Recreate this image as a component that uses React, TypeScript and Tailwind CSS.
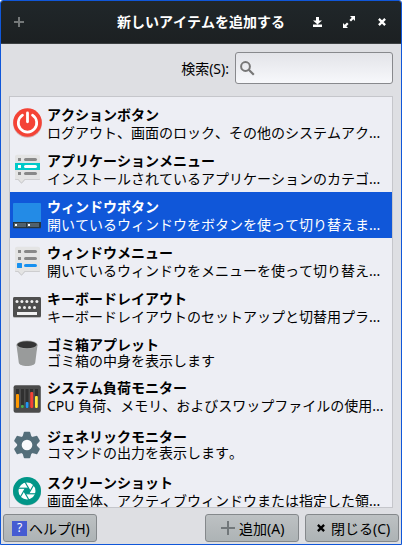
import type { ReactNode } from 'react';

const PowerIcon = () => (
  <svg width="32" height="32" viewBox="0 0 32 32">
    <circle cx="15.500" cy="16.300" r="14.500" fill="#d5b5b8" />
    <circle cx="15.500" cy="15.500" r="14.300" fill="#f44336" />
    <path d="M10.500 8.200a9.200 9.200 0 1 0 10 0" fill="none" stroke="#fff" strokeWidth="2.700" strokeLinecap="round" />
    <path d="M15.500 6v8.800" stroke="#fff" strokeWidth="2.800" strokeLinecap="round" />
  </svg>
);

const Bubble = ({ children }: { children: ReactNode }) => (
  <svg width="32" height="32" viewBox="0 0 32 32">
    <path d="M5 3h21a2 2 0 0 1 2 2v21a1 1 0 0 1-1 1H13l-3.500 3.800L6 27H4a1 1 0 0 1-1-1V5a2 2 0 0 1 2-2z" fill="#c6c6c8" />
    <path d="M5 1.700h21a2 2 0 0 1 2 2v21.500a1 1 0 0 1-1 1H12.500L9.500 29.700 6.500 26.200H4a1 1 0 0 1-1-1V3.700a2 2 0 0 1 2-2z" fill="#e4e4e4" />
    {children}
  </svg>
);

const AppMenuIcon = () => (
  <Bubble>
    <rect x="3" y="10" width="25" height="7" fill="#00c9c9" />
    <g fill="#888">
      <rect x="6" y="5" width="3" height="3" />
      <rect x="12" y="4.900" width="13" height="3.200" rx="1.600" />
      <rect x="6" y="19" width="3" height="3" />
      <rect x="12" y="18.900" width="13" height="3.200" rx="1.600" />
    </g>
    <rect x="6" y="12" width="3" height="3" fill="#fff" />
    <rect x="12" y="11.900" width="13" height="3.200" rx="1.600" fill="#fff" />
  </Bubble>
);

const WindowMenuIcon = () => (
  <Bubble>
    <g fill="#888">
      <rect x="6" y="5" width="3" height="3" />
      <rect x="12" y="4.900" width="13" height="3.200" rx="1.600" />
      <rect x="6" y="12" width="3" height="3" />
      <rect x="12" y="11.900" width="13" height="3.200" rx="1.600" />
    </g>
    <g fill="#1690f0">
      <rect x="5" y="18" width="5" height="5" rx=".5" />
      <rect x="12" y="18.900" width="13" height="3.200" rx="1.600" />
    </g>
  </Bubble>
);

const TaskbarIcon = () => (
  <svg width="32" height="32" viewBox="0 0 32 32">
    <rect x="1" y="5" width="28" height="24.800" rx="1" fill="#174fa8" />
    <path d="M2 4h26a1 1 0 0 1 1 1v18H1V5a1 1 0 0 1 1-1z" fill="#238be6" />
    <path d="M1 23h28v5a1 1 0 0 1-1 1H2a1 1 0 0 1-1-1z" fill="#28353c" />
    <rect x="2" y="24" width="12" height="4" fill="#51616c" />
    <rect x="15" y="24" width="12" height="4" fill="#51616c" />
    <path d="M3 25h2v2H3zM16 25h2v2h-2z" fill="#fff" />
  </svg>
);

const KeyboardIcon = () => (
  <svg width="32" height="32" viewBox="0 0 32 32">
    <rect x="1" y="6" width="28" height="20.800" rx="1.500" fill="#aaa" />
    <rect x="1" y="6" width="28" height="20" rx="1.500" fill="#4f4f4f" />
    <g fill="#f1f1f1">
      {[5, 9.9, 14.9, 19.9, 24.9].map((x) => <circle key={x} cx={x} cy="10.500" r="1.500" />)}
      {[7.5, 12.5, 17.5, 22.5].map((x) => <circle key={x} cx={x} cy="16.500" r="1.500" />)}
      <rect x="5" y="21" width="20" height="3" />
    </g>
  </svg>
);

const TrashIcon = () => (
  <svg width="32" height="32" viewBox="0 0 32 32">
    <path d="M4.500 8h21l-2.300 17.800c-.3 2-3.500 3.200-8.200 3.200s-7.900-1.200-8.200-3.200z" fill="#999b9b" />
    <ellipse cx="15" cy="7.700" rx="10.600" ry="4.300" fill="#a7a9a9" />
    <ellipse cx="15" cy="7.700" rx="9.800" ry="3.500" fill="#343434" />
  </svg>
);

const LoadIcon = () => (
  <svg width="32" height="32" viewBox="0 0 32 32">
    <rect x="1.600" y="2.200" width="27.200" height="27.600" rx="2" fill="#4b4b4b" />
    <path d="M4 6h3v19H4zM9 6h3v19H9zM13.500 6h3v19h-3zM18 6h3v19h-3zM23 6h3v19h-3z" fill="#303030" />
    <rect x="4" y="11" width="3" height="14" rx="1" fill="#ff9800" />
    <rect x="9" y="22" width="2.800" height="3" rx="1" fill="#4caf50" />
    <rect x="13.700" y="19" width="2.800" height="6" rx="1" fill="#2196f3" />
    <rect x="18.200" y="9" width="3" height="16" rx="1" fill="#f44336" />
    <rect x="23" y="13" width="2.800" height="12" rx="1" fill="#ffeb3b" />
  </svg>
);

const GearIcon = () => (
  <svg width="32" height="32" viewBox="0 0 32 32">
    <g fill="#546e7a">
      <circle cx="15" cy="16" r="9.800" />
      {[0, 60, 120, 180, 240, 300].map((a) => (
        <path key={a} transform={`rotate(${a} 15 16)`} d="M12.700 2.700h4.600a1 1 0 0 1 1 1l1.500 5h-9.600l1.500-5a1 1 0 0 1 1-1z" />
      ))}
    </g>
    <circle cx="15" cy="16" r="5.300" fill="#f8f9fb" />
  </svg>
);

const ShutterIcon = () => (
  <svg width="32" height="32" viewBox="0 0 32 32">
    <circle cx="15" cy="16.700" r="14" fill="#a9c5c4" />
    <circle cx="15" cy="16" r="14" fill="#009688" />
    <circle cx="15" cy="16" r="8.500" fill="#fff" />
    <path d="M13.400 13.230h3.200l1.600 2.770-1.600 2.770h-3.200L11.800 16z" fill="#009688" />
    <g stroke="#009688" strokeWidth="1.200" fill="none">
      {[0, 60, 120, 180, 240, 300].map((a) => (
        <path key={a} transform={`rotate(${a} 15 16)`} d="M16.600 13.230H6.500" />
      ))}
    </g>
  </svg>
);

const items = [
  { icon: <PowerIcon />, name: 'アクションボタン', text: 'ログアウト、画面のロック、その他のシステムアク...', row: 'h-[46px]', lines: 'leading-[18px] pt-[2px]' },
  { icon: <AppMenuIcon />, name: 'アプリケーションメニュー', text: 'インストールされているアプリケーションのカテゴ...', row: 'h-[46px]', lines: 'leading-[18px] pt-[2px]' },
  { icon: <TaskbarIcon />, name: 'ウィンドウボタン', text: '開いているウィンドウをボタンを使って切り替えま...', row: 'h-[46px] bg-[#1057d9] text-white', lines: 'leading-[18px] pt-[2px]' },
  { icon: <WindowMenuIcon />, name: 'ウィンドウメニュー', text: '開いているウィンドウをメニューを使って切り替え...', row: 'h-[46px]', lines: 'leading-[18px] pt-[2px]' },
  { icon: <KeyboardIcon />, name: 'キーボードレイアウト', text: 'キーボードレイアウトのセットアップと切替用プラ...', row: 'h-[46px]', lines: 'leading-[18px] pt-[2px]' },
  { icon: <TrashIcon />, name: 'ゴミ箱アプレット', text: 'ゴミ箱の中身を表示します', row: 'h-[46px]', lines: 'leading-[16px]' },
  { icon: <LoadIcon />, name: 'システム負荷モニター', text: 'CPU 負荷、メモリ、およびスワップファイルの使用...', row: 'h-[46px]', lines: 'leading-[18px] pb-[5px]' },
  { icon: <GearIcon />, name: 'ジェネリックモニター', text: 'コマンドの出力を表示します。', row: 'h-[46px]', lines: 'leading-[16px]' },
  { icon: <ShutterIcon />, name: 'スクリーンショット', text: '画面全体、アクティブウィンドウまたは指定した領...', row: 'h-[46px]', lines: 'leading-[18px] pt-[2px]' },
];

const buttonStyle =
  'flex h-7 w-[94px] items-center rounded-[3px] border border-[#84888b] bg-linear-to-b from-[#bdc1c3] to-[#adb3b5] whitespace-nowrap';

export default function App() {
  return (
    <div className="flex h-[545px] w-[402px] flex-col overflow-hidden rounded-t-[3px] border border-[#1057d9] bg-[#dedfe3] font-['Noto_Sans','Noto_Sans_CJK_JP',sans-serif] text-[14px] text-black [font-kerning:none]">
      <header className="flex h-[43px] shrink-0 items-center border-b border-[#3c4042] bg-linear-to-b from-[#20272a] to-[#1c2022] text-white">
        <svg className="ml-[13px] shrink-0" width="10" height="10" viewBox="0 0 10 10">
          <path d="M4 0h2v4h4v2H6v4H4V6H0V4h4z" fill="#747879" />
        </svg>
        <h1 className="ml-[93px] w-[168px] text-[14px] leading-5 font-bold whitespace-nowrap">新しいアイテムを追加する</h1>
        <svg className="ml-[28px] shrink-0" width="9" height="12" viewBox="0 0 9 12">
          <path d="M3 1h3v3.500h3L4.500 8.500 0 4.500h3zM0 8.500h9V11H0z" fill="#fff" />
        </svg>
        <svg className="ml-[21px] shrink-0" width="13" height="12" viewBox="0 0 13 12">
          <path d="M7 0h5v5l-1.700-1.700-2.300 2.300L6.400 4l2.300-2.300zM0 7l1.700 1.700L4 6.400 5.600 8l-2.300 2.300L5 12H0z" fill="#fff" />
        </svg>
        <svg className="ml-[22px] shrink-0" width="8" height="8" viewBox="0 0 8 8">
          <path d="M.9.9l6.200 6.200M7.100.9L.9 7.100" stroke="#fff" strokeWidth="2.300" />
        </svg>
      </header>

      <div className="mb-1 flex h-12 shrink-0 items-center justify-end pr-2">
        <label className="mr-[6px] whitespace-nowrap">検索(S):</label>
        <div className="flex h-8 w-[158px] items-center rounded-[3px] border border-[#88898d] bg-linear-to-b from-[#e3e4e9] to-[#f7f8fb] pl-1">
          <svg width="15" height="15" viewBox="0 0 15 15">
            <circle cx="5.500" cy="5.500" r="4.400" fill="none" stroke="#777" strokeWidth="2" />
            <path d="M8.800 8.800l5 5" stroke="#777" strokeWidth="2.200" />
          </svg>
        </div>
      </div>

      <main className="mx-2 h-[412px] shrink-0 overflow-hidden border border-[#c5c6cb] bg-[#edeef4] pt-[3px]">
        {items.map((item) => (
          <div key={item.name} className={`flex items-center pl-[2px] ${item.row}`}>
            <div className="h-8 w-8 shrink-0">{item.icon}</div>
            <div className={`ml-[3px] whitespace-nowrap ${item.lines}`}>
              <div className="font-bold">{item.name}</div>
              <div>{item.text}</div>
            </div>
          </div>
        ))}
      </main>

      <footer className="flex h-9 shrink-0 items-start px-[2px] pt-[6px]">
        <button className={`${buttonStyle} pl-2`}>
          <span className="mr-[2px] flex h-[15px] w-[15px] shrink-0 items-center justify-center bg-[#455bd2] text-[12px] text-white">?</span>
          ヘルプ(H)
        </button>
        <button className={`${buttonStyle} ml-[108px] pl-[15px]`}>
          <svg className="mr-1 shrink-0" width="14" height="14" viewBox="0 0 14 14">
            <path d="M6 0h2v6h6v2H8v6H6V8H0V6h6z" fill="#71777a" />
          </svg>
          追加(A)
        </button>
        <button className={`${buttonStyle} ml-[6px] pl-[11px]`}>
          <svg className="mr-[6px] shrink-0" width="8" height="8" viewBox="0 0 8 8">
            <path d="M.9.9l6.200 6.200M7.100.9L.9 7.100" stroke="#000" strokeWidth="2.300" />
          </svg>
          閉じる(C)
        </button>
      </footer>
    </div>
  );
}
